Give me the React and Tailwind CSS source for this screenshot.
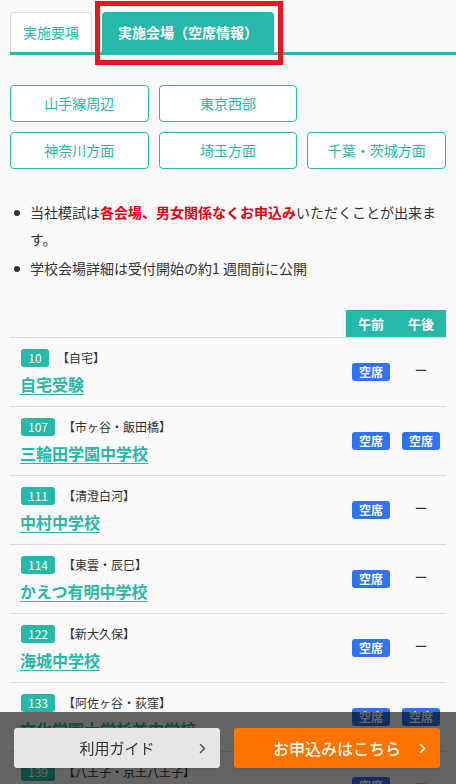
import React from "react";

const areas = [
  ["山手線周辺", "東京西部", null],
  ["神奈川方面", "埼玉方面", "千葉・茨城方面"],
];

const schools = [
  { no: "10", area: "【自宅】", name: "自宅受験", am: true, pm: false },
  { no: "107", area: "【市ヶ谷・飯田橋】", name: "三輪田学園中学校", am: true, pm: true },
  { no: "111", area: "【清澄白河】", name: "中村中学校", am: true, pm: false },
  { no: "114", area: "【東雲・辰巳】", name: "かえつ有明中学校", am: true, pm: false },
  { no: "122", area: "【新大久保】", name: "海城中学校", am: true, pm: false },
  { no: "133", area: "【阿佐ヶ谷・荻窪】", name: "文化学園大学杉並中学校", am: true, pm: true },
  { no: "139", area: "【八王子・京王八王子】", name: "共立女子第二中学校", am: true, pm: false },
];

const Chevron = ({ className }) => (
  <svg width="7" height="11" viewBox="0 0 7 11" className={className} fill="none">
    <path d="M1.5 1.5 L5.5 5.5 L1.5 9.5" stroke="currentColor" strokeWidth="1.6" strokeLinecap="round" strokeLinejoin="round" />
  </svg>
);

const Seat = ({ open }) =>
  open ? (
    <span className="inline-flex h-[18px] w-[38px] items-center justify-center rounded-[3px] bg-[#2f73f3] text-[12px] font-bold leading-none text-white">
      空席
    </span>
  ) : (
    <span className="text-[13px] leading-none text-[#333]">ー</span>
  );

const App = () => {
  return (
    <div
      className="relative min-h-[784px] bg-[#fafafa] pb-[90px] text-[#333]"
      style={{ fontFamily: '"Noto Sans CJK JP", "Noto Sans", sans-serif' }}
    >
      {/* TABS */}
      <div className="ml-[10px] flex gap-[10px] border-b-[3px] border-[#26b8a8] pt-[12px]">
        <div className="flex h-[40px] w-[82px] items-center justify-center rounded-t-[4px] border border-b-0 border-[#dddddd] bg-white text-[14px] text-[#26b8a8]">
          実施要項
        </div>
        <div className="flex h-[40px] w-[172px] items-center justify-center rounded-t-[4px] bg-[#26b8a8] text-[14px] font-bold text-white">
          実施会場（空席情報）
        </div>
      </div>
      <div className="pointer-events-none absolute left-[95px] top-[1px] h-[64px] w-[188px] border-[5px] border-[#e8161f]" />

      {/* AREA BUTTONS */}
      <div className="mt-[30px] grid grid-cols-3 gap-[10px] px-[10px]">
        {areas.flat().map((a, i) =>
          a ? (
            <div
              key={i}
              className="flex h-[37px] items-center justify-center rounded-[4px] border border-[#26b8a8] bg-white text-[14px] text-[#26b8a8]"
            >
              {a}
            </div>
          ) : (
            <div key={i} />
          )
        )}
      </div>

      {/* NOTES */}
      <ul className="mt-[30px] flex flex-col gap-[2px] pl-[30px] pr-[12px] text-[14px] leading-[27px]">
        <li className="relative">
          <span className="absolute left-[-16px] top-[11px] h-[6px] w-[6px] rounded-full bg-[#333]" />
          当社模試は<span className="font-bold text-[#e60012]">各会場、男女関係なくお申込み</span>いただくことが出来ます。
        </li>
        <li className="relative">
          <span className="absolute left-[-16px] top-[11px] h-[6px] w-[6px] rounded-full bg-[#333]" />
          学校会場詳細は受付開始の約1 週間前に公開
        </li>
      </ul>

      {/* TABLE */}
      <div className="mx-[10px] mt-[28px]">
        <div className="flex justify-end border-b border-[#dddddd]">
          <div className="flex h-[27px] w-[100px] bg-[#26b8a8] text-[13px] font-bold text-white">
            <span className="flex w-1/2 items-center justify-center">午前</span>
            <span className="flex w-1/2 items-center justify-center">午後</span>
          </div>
        </div>
        {schools.map((s) => (
          <div key={s.no} className="flex h-[69px] items-center border-b border-[#dddddd]">
            <div className="flex flex-1 flex-col gap-[6px] pl-[10px]">
              <div className="flex items-center gap-[8px] pl-[1px]">
                <span className="flex h-[18px] min-w-[28px] items-center justify-center rounded-[3px] bg-[#26b8a8] px-[7px] text-[12px] leading-none text-white">
                  {s.no}
                </span>
                <span className="text-[12px] leading-none text-[#333]">{s.area}</span>
              </div>
              <a className="w-fit text-[16px] font-bold leading-[22px] text-[#26b8a8] underline underline-offset-[3px]">
                {s.name}
              </a>
            </div>
            <div className="flex w-[100px]">
              <div className="flex w-1/2 justify-center">
                <Seat open={s.am} />
              </div>
              <div className="flex w-1/2 justify-center">
                <Seat open={s.pm} />
              </div>
            </div>
          </div>
        ))}
      </div>

      {/* BOTTOM BAR */}
      <div className="fixed bottom-0 left-0 right-0 flex h-[72px] items-center gap-[14px] bg-black/60 pl-[14px]">
        <div className="relative flex h-[40px] w-[206px] items-center justify-center rounded-[3px] bg-[#e6e6e6] text-[15px] text-[#333] shadow">
          利用ガイド
          <Chevron className="absolute right-[14px] text-[#555]" />
        </div>
        <div className="relative flex h-[40px] w-[206px] items-center justify-center rounded-[3px] bg-[#ff7300] text-[16px] font-medium text-white shadow">
          お申込みはこちら
          <Chevron className="absolute right-[14px] text-white" />
        </div>
      </div>
    </div>
  );
};

export default App;
